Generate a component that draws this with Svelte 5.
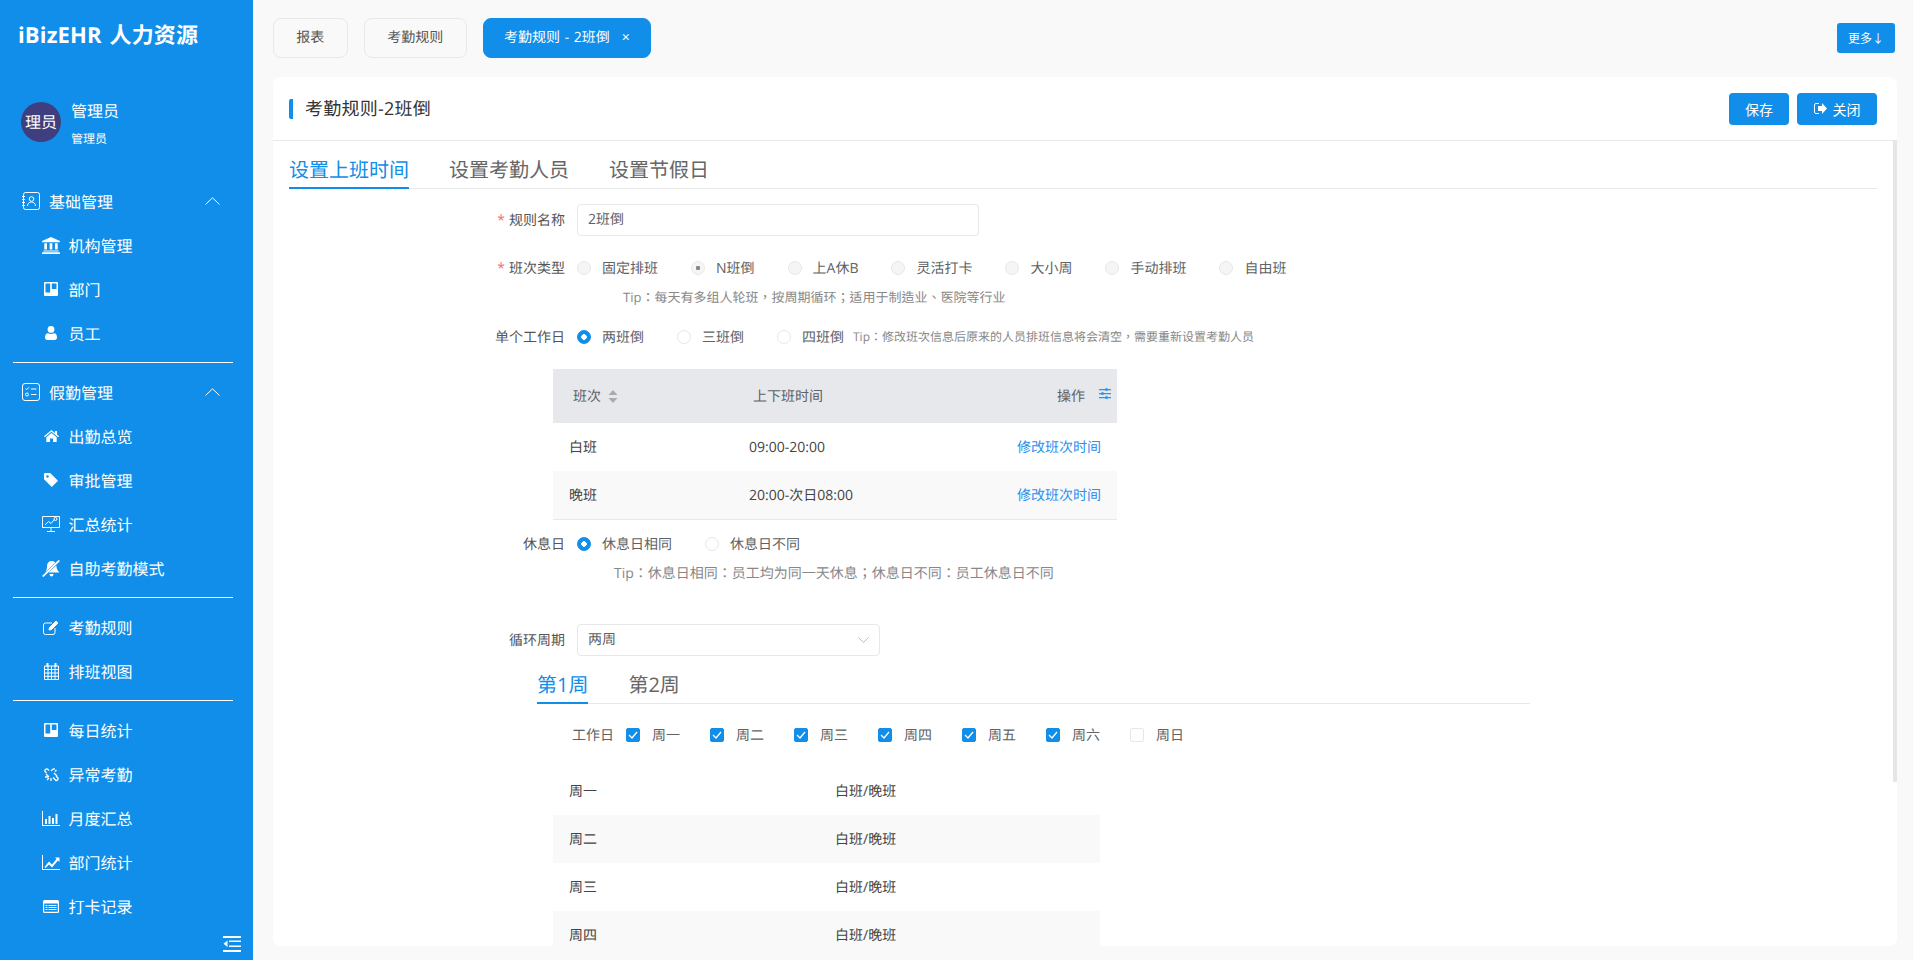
<script>
  const icons = {
    bank: { w: 18, h: 17, vb: '0 0 20 19', d: 'M10 0 20 4.500V6H0V4.500ZM2.500 7h3v7h-3ZM8.500 7h3v7h-3ZM14.500 7h3v7h-3ZM1.500 15h17v1.300h-17ZM0 17h20v2H0Z' },
    trello: { w: 14, h: 14, vb: '0 0 14 14', d: 'M1 0h12a1 1 0 0 1 1 1v12a1 1 0 0 1-1 1H1a1 1 0 0 1-1-1V1a1 1 0 0 1 1-1ZM1.500 1.500V10.500H6.200V1.500ZM7.800 1.500V7H12.500V1.500Z' },
    user: { w: 12, h: 14, vb: '0 0 12 14', d: 'M6 0a3.400 3.400 0 1 1 0 6.800A3.400 3.400 0 0 1 6 0ZM3 7.200c.8.500 1.800.8 3 .8s2.200-.3 3-.8c2 .1 3 1.800 3 4.300 0 1.500-.9 2.500-2.300 2.500H2.300C.9 14 0 13 0 11.500 0 9 1 7.300 3 7.200Z' },
    home: { w: 15, h: 12, vb: '0 0 15 12', d: 'M7.500 0 11 2.900V1h2v3.600l2 1.700-.8.900L7.500 1.700.8 7.200 0 6.300ZM7.500 3 12.700 7.300V12H9V8.500H6V12H2.300V7.300Z' },
    tag: { w: 14, h: 14, vb: '0 0 14 14', d: 'M1 0h5.200L14 7.800 7.800 14 0 6.200V1a1 1 0 0 1 1-1ZM3.500 2.200a1.300 1.300 0 1 0 0 2.600 1.300 1.300 0 0 0 0-2.600Z' },
    bell: { w: 18, h: 17, vb: '0 0 18 17', d: 'M16.500 0 18 1 1.500 17 0 16ZM9.500 1c1.700 0 3 .6 3.800 1.500L3.500 12c.8-1.500 1.500-3 1.500-6 0-3 2-5 4.500-5ZM14.300 5.500c.3 3.500 1.300 5.500 3.200 7H6.500ZM7.500 14h4c0 1.500-.9 2.500-2 2.500s-2-1-2-2.500Z' },
    list: { w: 16, h: 13, vb: '0 0 16 13', d: 'M1.500 0h13A1.500 1.500 0 0 1 16 1.500v10a1.500 1.500 0 0 1-1.500 1.500h-13A1.500 1.500 0 0 1 0 11.500v-10A1.500 1.500 0 0 1 1.500 0ZM1.200 3.500V11.500a.3.3 0 0 0 .3.3h13a.3.3 0 0 0 .3-.3V3.500ZM2.500 5h2v1h-2ZM5.500 5h8v1h-8ZM2.500 7h2v1h-2ZM5.500 7h8v1h-8ZM2.500 9h2v1h-2ZM5.500 9h8v1h-8Z' },
    bars: { w: 18, h: 15, vb: '0 0 18 15', d: 'M0 0h1v14h17v1H0ZM3 8h2v5H3ZM6.500 5h2v8h-2ZM10 7h2v6h-2ZM13.500 3h2v10h-2Z' },
    line: { w: 18, h: 15, vb: '0 0 18 15', d: 'M0 0h1v14h17v1H0ZM2.500 12 7 6.500l3 3L14.500 4 13 2.500h4.500V7L16 5.500 10 12.500 7 9.500 3.500 13Z' }
  };
  const strokes = {
    monitor: { w: 18, h: 16, vb: '0 0 18 16', body: '<path d="M.5.5h17v11H.5ZM9 11.500V15M5 15.500h8M3 9l3.500-3.500 2.500 2 3.500-4"/><circle cx="13.500" cy="3" r="1.500"/>' },
    edit: { w: 16, h: 15, vb: '0 0 16 15', body: '<path d="M12 8v4.500a2 2 0 0 1-2 2H2.500a2 2 0 0 1-2-2V5a2 2 0 0 1 2-2H9"/><path d="M6 10l.5-2.500L13 1l2 2-6.500 6.500Z" fill="#fff"/>' },
    calendar: { w: 15, h: 17, vb: '0 0 15 17', body: '<path d="M.5 3h14v13.500H.5ZM.5 6.500h14M.5 10h14M.5 13.300h14M4 3v13.500M7.500 3v13.500M11 3v13.500"/><path d="M3.500 0v4M11.500 0v4" stroke-width="2"/>' },
    unlink: { w: 15, h: 15, vb: '0 0 15 15', body: '<path d="M5 3.500 3.500 2a2 2 0 0 0-2.500 2.500L2.500 6M9 10.500l3 3a2 2 0 0 0 2-2.500l-2-2M7 4l2-2M10 1v2M12.500 3 11 4.500M1 10h3M3 13l2-2M7 11v3M2 7l3 3 M10 6 13 9" stroke-width="1.300"/>' }
  };
  const menu = [
    { group: '基础管理', kind: 'contact', items: [['机构管理', 'bank'], ['部门', 'trello'], ['员工', 'user']] },
    { divider: true },
    { group: '假勤管理', kind: 'check', items: [['出勤总览', 'home'], ['审批管理', 'tag'], ['汇总统计', 'monitor'], ['自助考勤模式', 'bell']] },
    { divider: true },
    { items: [['考勤规则', 'edit'], ['排班视图', 'calendar']] },
    { divider: true },
    { items: [['每日统计', 'trello'], ['异常考勤', 'unlink'], ['月度汇总', 'bars'], ['部门统计', 'line'], ['打卡记录', 'list']] }
  ];
  const shiftTypes = ['固定排班', 'N班倒', '上A休B', '灵活打卡', '大小周', '手动排班', '自由班'];
  const weekdays = ['周一', '周二', '周三', '周四', '周五', '周六'];
  const weekRows = ['周一', '周二', '周三', '周四'];
</script>

<div class="page">
  <aside class="side">
    <div class="brand">iBizEHR 人力资源</div>
    <div class="profile">
      <div class="avatar">理员</div>
      <div class="who">
        <div class="name">管理员</div>
        <div class="role">管理员</div>
      </div>
    </div>
    <nav>
      {#each menu as m}
        {#if m.divider}
          <div class="rule"></div>
        {:else}
          {#if m.group}
            <div class="group">
              <span class="gicon">
                {#if m.kind === 'contact'}
                  <svg width="18" height="18" viewBox="0 0 18 18" fill="none" stroke="#fff" stroke-width="1"><rect x="1.500" y=".5" width="16" height="17" rx="2"/><path d="M0 4.500h3M0 7.500h3M0 10.500h3M0 13.500h3"/><circle cx="9.500" cy="7" r="2.300"/><path d="M5.500 14c0-2.500 1.800-4 4-4s4 1.500 4 4"/></svg>
                {:else}
                  <svg width="18" height="18" viewBox="0 0 18 18" fill="none" stroke="#fff" stroke-width="1"><rect x=".5" y=".5" width="17" height="17" rx="2.500"/><path d="M3.500 5.500l1.200 1.200L7 4.300M9 6h5.500M9 11.500h5.500"/><circle cx="5" cy="11.500" r="1.500"/></svg>
                {/if}
              </span>
              <span class="gtext">{m.group}</span>
              <svg class="chev" width="15" height="8" viewBox="0 0 15 8" fill="none" stroke="#fff" stroke-width="1"><path d="M.5 7.500 7.500.8l7 6.700"/></svg>
            </div>
          {/if}
          {#each m.items as [label, ic]}
            <div class="item">
              <span class="iicon">
                {#if icons[ic]}
                  <svg width={icons[ic].w} height={icons[ic].h} viewBox={icons[ic].vb} fill="#fff" fill-rule="evenodd"><path d={icons[ic].d}/></svg>
                {:else}
                  <svg width={strokes[ic].w} height={strokes[ic].h} viewBox={strokes[ic].vb} fill="none" stroke="#fff" stroke-width="1">{@html strokes[ic].body}</svg>
                {/if}
              </span>
              <span>{label}</span>
            </div>
          {/each}
        {/if}
      {/each}
    </nav>
    <svg class="collapse" width="18" height="16" viewBox="0 0 18 16" fill="#fff"><path d="M0 0h18v2H0ZM6 4.500h12v1.500H6ZM6 9.500h12V11H6ZM0 14h18v2H0ZM4.500 4.500v6.500L.5 7.800Z"/></svg>
  </aside>

  <main class="main">
    <div class="topbar">
      <div class="pages">
        <div class="ptab">报表</div>
        <div class="ptab">考勤规则</div>
        <div class="ptab on">考勤规则 - 2班倒<span class="x">×</span></div>
      </div>
      <button class="more">更多↓</button>
    </div>

    <section class="card">
      <header class="chead">
        <div class="ctitle">考勤规则-2班倒</div>
        <div class="acts">
          <button class="btn save">保存</button>
          <button class="btn close">
            <svg width="13" height="11" viewBox="0 0 13 11"><path d="M5 .5H2A1.500 1.500 0 0 0 .5 2v7A1.500 1.500 0 0 0 2 10.500h3" fill="none" stroke="#fff"/><path d="M8 0l5 5.500L8 11V8H4V3h4Z" fill="#fff"/></svg>
            关闭
          </button>
        </div>
      </header>

      <div class="body">
        <div class="scrollbar"></div>
        <div class="tabs">
          <div class="tab on">设置上班时间</div>
          <div class="tab">设置考勤人员</div>
          <div class="tab">设置节假日</div>
        </div>

        <div class="row first">
          <div class="lab"><i>*</i>规则名称</div>
          <div class="input name-input">2班倒</div>
        </div>

        <div class="row types">
          <div class="lab"><i>*</i>班次类型</div>
          <div class="radios">
            {#each shiftTypes as t, i}
              <div class="radio"><span class="dot dis" class:dotted={i === 1}></span>{t}</div>
            {/each}
          </div>
        </div>
        <div class="tip tip1">Tip：每天有多组人轮班，按周期循环；适用于制造业、医院等行业</div>

        <div class="row day">
          <div class="lab">单个工作日</div>
          <div class="radios">
            <div class="radio"><span class="dot sel"></span>两班倒</div>
            <div class="radio"><span class="dot"></span>三班倒</div>
            <div class="radio"><span class="dot"></span>四班倒</div>
          </div>
          <div class="tip small">Tip：修改班次信息后原来的人员排班信息将会清空，需要重新设置考勤人员</div>
        </div>

        <table class="grid shifts">
          <colgroup><col class="c1" /><col class="c2" /><col /></colgroup>
          <thead>
            <tr>
              <th>
                <span class="th-in">班次
                  <svg width="10" height="13" viewBox="0 0 10 13" fill="#a8abb2"><path d="M5 0l4.500 5H.5ZM5 13 .5 8h9Z"/></svg>
                </span>
              </th>
              <th>上下班时间</th>
              <th class="ops">
                <span class="th-in">操作
                  <svg width="12" height="11" viewBox="0 0 12 11" fill="#2f95ef"><path d="M0 1h12v1.200H0ZM0 5h12v1.200H0ZM0 9h12v1.200H0Z"/><circle cx="7.500" cy="1.500" r="1.500"/><circle cx="3.500" cy="5.500" r="1.500"/><circle cx="7.500" cy="9.500" r="1.500"/></svg>
                </span>
              </th>
            </tr>
          </thead>
          <tbody>
            <tr><td>白班</td><td>09:00-20:00</td><td class="link">修改班次时间</td></tr>
            <tr><td>晚班</td><td>20:00-次日08:00</td><td class="link">修改班次时间</td></tr>
          </tbody>
        </table>

        <div class="row rest">
          <div class="lab">休息日</div>
          <div class="radios">
            <div class="radio"><span class="dot sel"></span>休息日相同</div>
            <div class="radio"><span class="dot"></span>休息日不同</div>
          </div>
        </div>
        <div class="tip tip3">Tip：休息日相同：员工均为同一天休息；休息日不同：员工休息日不同</div>

        <div class="row cycle">
          <div class="lab">循环周期</div>
          <div class="input select">两周
            <svg width="11" height="6" viewBox="0 0 11 6" fill="none" stroke="#bbb"><path d="M.5.5l5 5 5-5"/></svg>
          </div>
        </div>

        <div class="subtabs">
          <div class="stab on">第1周</div>
          <div class="stab">第2周</div>
        </div>

        <div class="checks">
          <span class="wlab">工作日</span>
          {#each weekdays as d}
            <div class="check">
              <span class="box on"><svg width="10" height="8" viewBox="0 0 10 8" fill="none" stroke="#fff" stroke-width="1.300"><path d="M1 4l3 3 5-6"/></svg></span>{d}
            </div>
          {/each}
          <div class="check"><span class="box"></span>周日</div>
        </div>

        <table class="grid week">
          <colgroup><col class="w1" /><col /></colgroup>
          <tbody>
            {#each weekRows as d}
              <tr><td>{d}</td><td>白班/晚班</td></tr>
            {/each}
          </tbody>
        </table>
      </div>
    </section>
  </main>
</div>

<style>
  :global(body) {
    margin: 0;
    font-family: "Open Sans", "Noto Sans CJK SC", sans-serif;
    text-rendering: geometricPrecision;
  }
  .page {
    display: flex;
    height: 960px;
    overflow: hidden;
    background: #f9f9f9;
    font-size: 14px;
    color: #606266;
  }
  .side {
    position: relative;
    flex: 0 0 253px;
    background: #108ee9;
    color: #fff;
  }
  .brand {
    margin: 20px 0 0 18px;
    font-size: 22px;
    line-height: 30px;
    font-weight: 700;
    word-spacing: 2px;
    letter-spacing: .15px;
  }
  .profile {
    display: flex;
    gap: 10px;
    height: 40px;
    margin: 52px 0 37px 21px;
  }
  .avatar {
    width: 40px;
    height: 40px;
    border-radius: 50%;
    background: #3f3f7f;
    font-size: 16px;
    line-height: 40px;
    text-align: center;
  }
  .who { margin-top: -2px; }
  .name { font-size: 16px; line-height: 22px; }
  .role { margin-top: 9px; font-size: 12px; line-height: 16px; }
  .group, .item {
    display: flex;
    align-items: center;
    height: 44px;
    font-size: 16px;
  }
  .group { padding-left: 22px; }
  .gicon { display: flex; width: 18px; margin-right: 9px; }
  .gtext { flex: 1; }
  .chev { margin-right: 33px; }
  .item { padding-left: 42px; }
  .iicon {
    display: flex;
    justify-content: center;
    width: 18px;
    margin-right: 8.500px;
  }
  .rule {
    width: 220px;
    height: 1px;
    margin: 7px 0 7px 13px;
    background: #fff;
  }
  .collapse {
    position: absolute;
    left: 223px;
    top: 936px;
  }

  .main {
    display: flex;
    flex: 1;
    flex-direction: column;
    min-width: 0;
  }
  .topbar {
    display: flex;
    justify-content: space-between;
    align-items: flex-start;
    box-sizing: border-box;
    height: 77px;
    padding: 18px 18px 0 20px;
  }
  .pages { display: flex; gap: 16.500px; }
  .ptab {
    box-sizing: border-box;
    height: 40px;
    padding: 0 22.250px;
    border: 1px solid #e8e8e8;
    border-radius: 8px;
    line-height: 38px;
    color: #555;
  }
  .ptab.on {
    padding: 0 20px;
    border-color: #108ee9;
    background: #108ee9;
    color: #fff;
    word-spacing: 1px;
  }
  .x { margin-left: 12px; font-size: 14px; }
  .more {
    width: 58px;
    height: 30px;
    margin-top: 5px;
    padding: 0;
    border: 0;
    border-radius: 3px;
    background: #108ee9;
    color: #fff;
    font: 12px "Open Sans", "Noto Sans CJK SC", sans-serif;
  }
  .card {
    display: flex;
    flex: 1;
    flex-direction: column;
    min-height: 0;
    margin: 0 16px 14px 20px;
    overflow: hidden;
    border-radius: 8px;
    background: #fff;
  }
  .chead {
    display: flex;
    flex: 0 0 auto;
    justify-content: space-between;
    align-items: center;
    box-sizing: border-box;
    height: 64px;
    padding: 0 20px 0 16px;
    border-bottom: 1px solid #e8e8e8;
  }
  .ctitle {
    padding-left: 12px;
    border-left: 4px solid #108ee9;
    border-radius: 2px 0 0 2px;
    font-size: 18px;
    line-height: 20px;
    letter-spacing: .25px;
    color: #333;
  }
  .acts { display: flex; gap: 8px; }
  .btn {
    display: flex;
    justify-content: center;
    align-items: center;
    gap: 6px;
    height: 32px;
    padding: 0;
    border: 0;
    border-radius: 4px;
    background: #108ee9;
    color: #fff;
    font: 14px "Open Sans", "Noto Sans CJK SC", sans-serif;
  }
  .save { width: 60px; }
  .close { width: 80px; }

  .body {
    position: relative;
    flex: 1;
    min-height: 0;
    padding: 0 20px 0 16px;
    overflow: hidden;
  }
  .scrollbar {
    position: absolute;
    top: 0;
    right: 0;
    width: 4px;
    height: 641px;
    background: #e6e6e6;
  }
  .tabs {
    display: flex;
    gap: 40px;
    border-bottom: 1px solid #e8e8e8;
  }
  .tab {
    box-sizing: border-box;
    height: 48px;
    margin-bottom: -1px;
    padding-top: 14px;
    font-size: 20px;
    line-height: 30px;
    color: #666;
  }
  .tab.on, .stab.on {
    border-bottom: 2px solid #108ee9;
    color: #108ee9;
  }
  .row {
    display: flex;
    align-items: center;
    min-height: 32px;
  }
  .first { margin-top: 15px; }
  .types { margin-top: 16px; }
  .day { margin-top: 14px; }
  .rest { margin-top: 8px; }
  .cycle { margin-top: 40px; }
  .lab {
    flex: 0 0 276px;
    margin-right: 12px;
    text-align: right;
    color: #555;
  }
  .lab i {
    margin-right: 4px;
    font-style: normal;
    color: #f56c6c;
  }
  .input {
    box-sizing: border-box;
    height: 32px;
    padding: 0 10px;
    border: 1px solid #e8e8e8;
    border-radius: 4px;
    line-height: 30px;
  }
  .name-input { width: 402px; }
  .select {
    display: flex;
    justify-content: space-between;
    align-items: center;
    width: 303px;
  }
  .radios { display: flex; gap: 33px; }
  .radio { display: flex; align-items: center; }
  .dot {
    box-sizing: border-box;
    width: 14px;
    height: 14px;
    margin-right: 11px;
    border: 1px solid #e8e8e8;
    border-radius: 50%;
    background: #fff;
  }
  .dot.dis { background: #f5f5f5; }
  .dot.dotted {
    background: radial-gradient(circle, #888 0 2px, #f5f5f5 2.500px);
  }
  .dot.sel {
    border-color: #108ee9;
    background: radial-gradient(circle, #fff 0 2.500px, #108ee9 3px);
  }
  .tip {
    line-height: 20px;
    font-family: "Open Sans", "Noto Sans CJK TC", sans-serif;
    color: #888;
  }
  .tip1 { margin: 3px 0 0 334px; font-size: 13px; }
  .small { margin-left: 9px; font-size: 12px; }
  .tip3 { margin: 4px 0 0 325px; font-size: 14px; }

  .grid {
    margin-left: 264px;
    border-collapse: collapse;
    table-layout: fixed;
  }
  .grid td { padding: 0 16px; height: 48px; color: #444; }
  .grid tbody tr:nth-child(even) td { background: #f9f9f9; }
  .shifts { width: 564px; margin-top: 16px; border-bottom: 1px solid #e8e8e8; }
  .c1 { width: 180px; }
  .c2 { width: 200px; }
  th {
    height: 54px;
    padding: 0 6px 0 20px;
    background: #e6e8eb;
    font-weight: 400;
    text-align: left;
    color: #606266;
  }
  .th-in { display: inline-flex; align-items: center; gap: 7px; }
  .ops { text-align: right; }
  .ops .th-in { gap: 14px; }
  .ops svg { margin-top: -5px; }
  .grid td.link { text-align: right; color: #2f8fee; }
  .subtabs {
    display: flex;
    gap: 40px;
    width: 993px;
    margin-left: 248px;
    border-bottom: 1px solid #e8e8e8;
  }
  .stab {
    box-sizing: border-box;
    height: 48px;
    margin-bottom: -1px;
    padding-top: 14px;
    font-size: 20px;
    line-height: 30px;
    color: #666;
  }
  .checks {
    display: flex;
    align-items: center;
    height: 32px;
    margin: 15px 0 0 283px;
  }
  .wlab { margin-right: 12px; }
  .check {
    display: flex;
    align-items: center;
    width: 84px;
  }
  .box {
    display: flex;
    justify-content: center;
    align-items: center;
    box-sizing: border-box;
    width: 14px;
    height: 14px;
    margin-right: 12px;
    border: 1px solid #e8e8e8;
    border-radius: 2px;
    background: #fff;
  }
  .box.on { border-color: #108ee9; background: #108ee9; }
  .week { width: 547px; margin-top: 16px; }
  .w1 { width: 266px; }
</style>
